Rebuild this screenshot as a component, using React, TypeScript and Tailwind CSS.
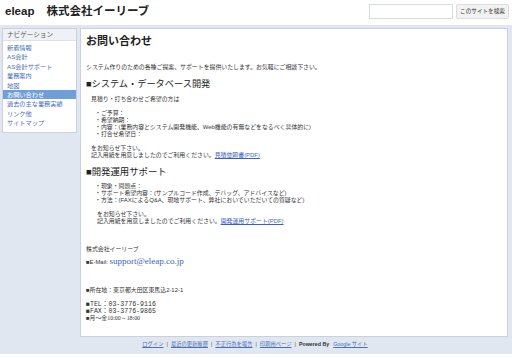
const jp = "font-['Liberation_Sans','Noto_Sans_CJK_JP',sans-serif]";

const navItems = [
  "新着情報",
  "AS会計",
  "AS会計サポート",
  "業務案内",
  "地図",
  "お問い合わせ",
  "過去の主な業務実績",
  "リンク他",
  "サイトマップ",
];

const Line = ({ children, className = "" }: { children: React.ReactNode; className?: string }) => (
  <p className={`h-[7px] text-[5.9px] leading-[7px] whitespace-nowrap text-[#333] ${className}`}>{children}</p>
);

const A = ({ children }: { children: React.ReactNode }) => (
  <span className="text-[#3b5fc0] underline">{children}</span>
);

const App = () => {
  return (
    <div className={`flex h-[358px] w-[512px] flex-col overflow-hidden bg-white ${jp}`}>
      {/* header */}
      <div className="flex h-[25px] shrink-0 items-start justify-between pl-[5px] pr-[3px] pt-[4px]">
        <h1 className="text-[11.5px] font-bold leading-[15px] text-[#222]">
          eleap<span className="ml-[12px]">株式会社イーリーブ</span>
        </h1>
        <div className="flex items-center gap-[3px]">
          <div className="h-[15px] w-[84px] border border-[#d6dbe2] bg-white" />
          <button className="h-[15px] w-[53px] rounded-[2px] border border-[#dcdcdc] bg-[#f2f2f2] text-[5.6px] leading-[13px] text-[#333]">
            このサイトを検索
          </button>
        </div>
      </div>

      {/* body */}
      <div className="flex flex-1 flex-col bg-[#e1e7f0] pl-[2px] pr-[4px] pt-[3px]">
        <div className="flex items-start gap-[3px]">
          {/* nav */}
          <div className="w-[75px] border border-[#c8d1dc] bg-white pb-[4px]">
            <div className="h-[12px] border-b border-[#dde2e8] bg-[#eef1f5] pl-[4px] text-[6.6px] leading-[12px] text-[#555]">
              ナビゲーション
            </div>
            <div className="pt-[2px]">
              {navItems.map((n) => (
                <div
                  key={n}
                  className={`h-[9.4px] pl-[4px] text-[6.2px] leading-[9.4px] ${
                    n === "お問い合わせ" ? "bg-[#6f9ed8] text-white" : "text-[#4b6fb8]"
                  }`}
                >
                  {n}
                </div>
              ))}
            </div>
          </div>

          {/* main */}
          <div className="h-[309px] flex-1 border border-[#c8d1dc] bg-white pl-[5px] pt-[5px]">
            <h2 className="text-[11px] font-bold leading-[14px] text-[#222]">お問い合わせ</h2>
            <Line className="mt-[16px]">システム作りのための各種ご提案、サポートを提供いたします。お気軽にご相談下さい。</Line>
            <p className="mt-[7px] h-[12px] text-[9.2px] leading-[12px] text-[#222]">■システム・データベース開発</p>
            <div className="pl-[5px]">
              <Line className="mt-[6px]">見積り・打ち合わせご希望の方は</Line>
              <div className="mt-[7px] pl-[4px]">
                <Line>・ご予算：</Line>
                <Line>・希望納期：</Line>
                <Line>・内容：(業務内容とシステム開発機能、Web機能の有無などをなるべく具体的に)</Line>
                <Line>・打合せ希望日：</Line>
              </div>
              <Line className="mt-[7px]">をお知らせ下さい。</Line>
              <Line>
                記入用紙を用意しましたのでご利用ください。<A>見積依頼書(PDF)</A>
              </Line>
            </div>
            <p className="mt-[7px] h-[12px] text-[9.4px] leading-[12px] text-[#222]">■開発運用サポート</p>
            <div className="pl-[9px]">
              <Line className="mt-[5px]">・現象・問題点：</Line>
              <Line>・サポート希望内容：(サンプルコード作成、デバッグ、アドバイスなど)</Line>
              <Line>・方法：(FAXによるQ&amp;A、現地サポート、弊社においでいただいての質疑など)</Line>
              <div className="pl-[2px]">
                <Line className="mt-[7px]">をお知らせ下さい。</Line>
                <Line>
                  記入用紙を用意しましたのでご利用ください。<A>開発運用サポート(PDF)</A>
                </Line>
              </div>
            </div>
            <Line className="mt-[21px]">株式会社イーリーブ</Line>
            <p className="mt-[3px] h-[11px] whitespace-nowrap text-[5.9px] leading-[11px] text-[#333]">
              ■E-Mail:{" "}
              <span className="font-['Liberation_Serif',serif] text-[9px] text-[#3b5fc0]">support@eleap.co.jp</span>
            </p>
            <Line className="mt-[20px]">■所在地：東京都大田区東馬込2-12-1</Line>
            <p className="mt-[7px] h-[7px] whitespace-nowrap font-['Liberation_Mono','Noto_Sans_CJK_JP',monospace] text-[6.6px] leading-[7px] text-[#333]">
              ■TEL：03-3776-9116
            </p>
            <p className="h-[7px] whitespace-nowrap font-['Liberation_Mono','Noto_Sans_CJK_JP',monospace] text-[6.6px] leading-[7px] text-[#333]">
              ■FAX：03-3776-9865
            </p>
            <Line>
              ■月～金<span className="font-['Liberation_Serif',serif]">10:00～18:00</span>
            </Line>
          </div>
        </div>

        {/* footer */}
        <div className="mt-[2px] flex justify-center pt-[1px] text-[5.3px] leading-[8px] text-[#555]">
          <span className="text-[#4b6fb8] underline">ログイン</span>
          <span className="mx-[3px]">|</span>
          <span className="text-[#4b6fb8] underline">最近の更新履歴</span>
          <span className="mx-[3px]">|</span>
          <span className="text-[#4b6fb8] underline">不正行為を報告</span>
          <span className="mx-[3px]">|</span>
          <span className="text-[#4b6fb8] underline">印刷用ページ</span>
          <span className="mx-[3px]">|</span>
          <span className="font-bold text-[#333]">Powered By</span>
          <span className="ml-[4px] text-[#4b6fb8] underline">Google サイト</span>
        </div>
      </div>
      <div className="h-[4px] shrink-0 bg-white" />
    </div>
  );
};

export default App;
